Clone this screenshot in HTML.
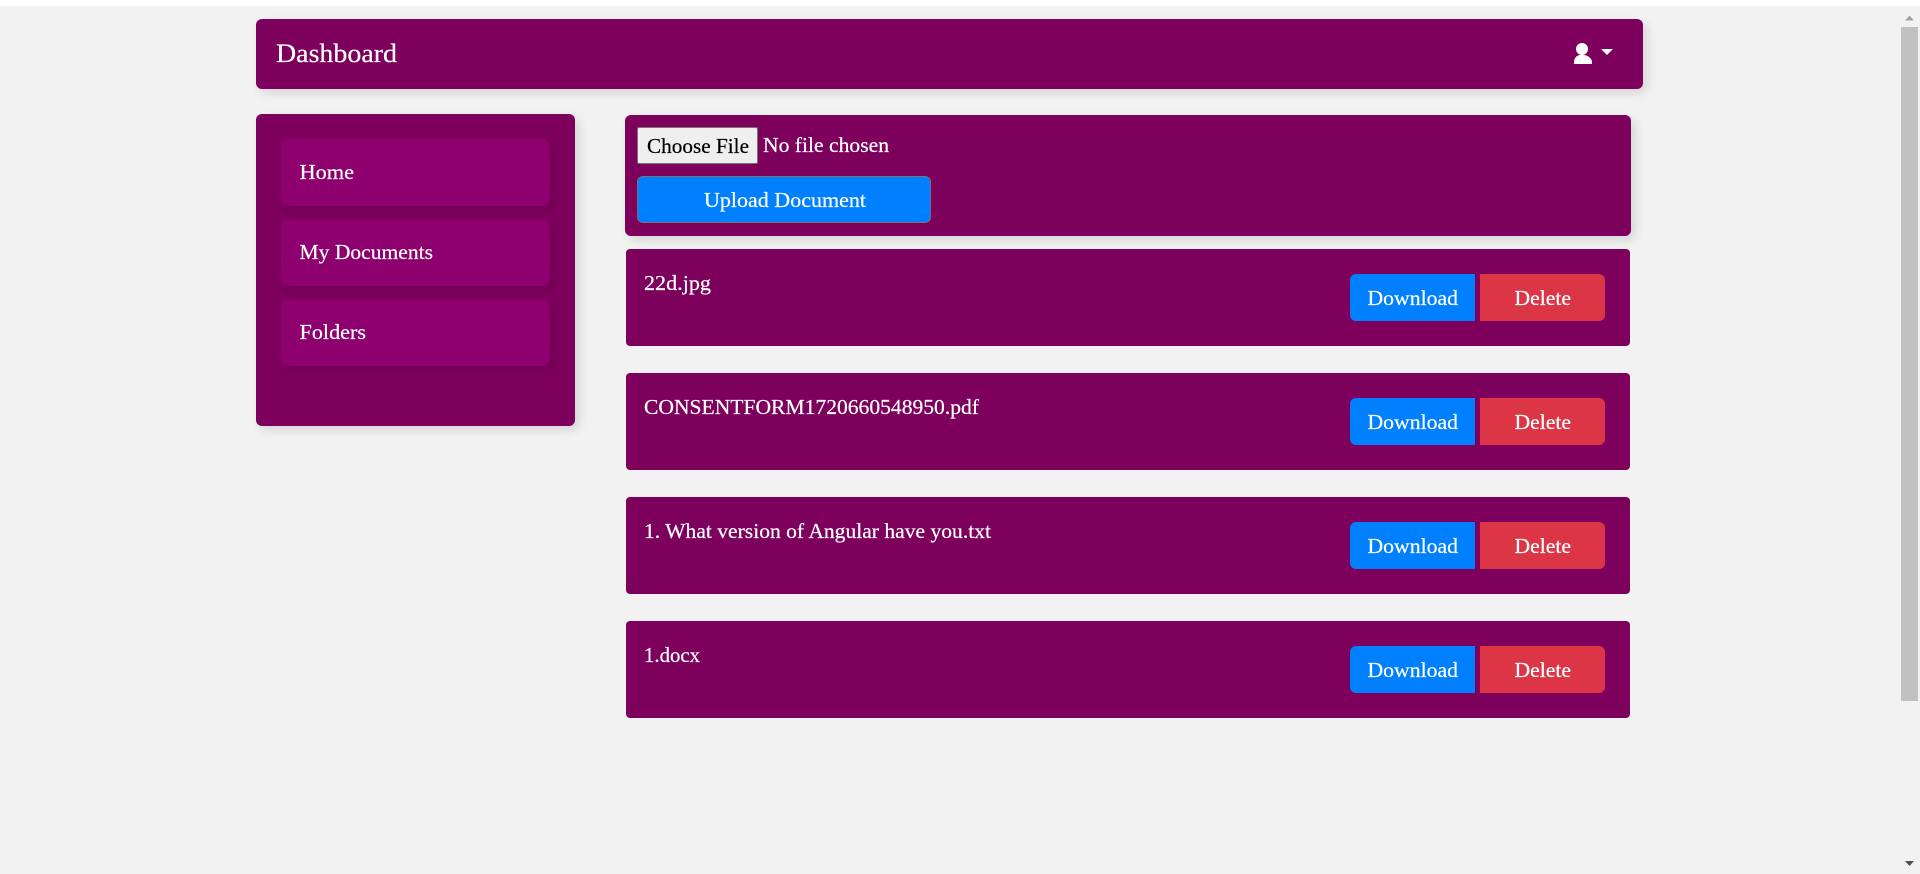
<!DOCTYPE html>
<html lang="en">
<head>
<meta charset="utf-8">
<title>Dashboard</title>
<style>
html,body{margin:0;padding:0;width:1920px;height:874px;overflow:hidden;background:#f2f2f2}
.a{position:absolute;box-sizing:border-box}
.p{background:#7d005d}
.item{background:#8f006f;border-radius:7px;left:281px;width:269px;height:67px;box-shadow:4px 4px 10px rgba(0,0,0,.12)}
.card{background:#7d005d;border-radius:4px;left:626px;width:1004px;height:97px}
.dl{background:#0080ff;left:1350px;width:125px;height:47px;border-radius:6px 0 0 6px}
.del{background:#dc3545;left:1480px;width:125px;height:47px;border-radius:0 6px 6px 0}
svg text{font-family:"Liberation Serif",serif;fill:#fff;stroke:#fff;stroke-width:.2px;font-size:21px}
</style>
</head>
<body>
<div class="a" style="left:0;top:0;width:1920px;height:6px;background:#fff"></div>

<div class="a p" style="left:256px;top:19px;width:1387px;height:70px;border-radius:6px;box-shadow:4px 4px 10px rgba(0,0,0,.12)"></div>
<div class="a p" style="left:256px;top:114px;width:319px;height:312px;border-radius:6px;box-shadow:4px 4px 10px rgba(0,0,0,.12)"></div>
<div class="a item" style="top:139px"></div>
<div class="a item" style="top:219px"></div>
<div class="a item" style="top:299px"></div>

<div class="a p" style="left:625px;top:115px;width:1006px;height:121px;border-radius:6px;box-shadow:4px 4px 10px rgba(0,0,0,.12)"></div>
<div class="a" style="left:637px;top:127px;width:121px;height:37px;background:#efefef;border:1px solid #767676;border-radius:2px"></div>
<div class="a" style="left:637px;top:176px;width:294px;height:47px;background:#0080ff;border:1px solid #767676;border-radius:6px"></div>

<div class="a card" style="top:249px"></div>
<div class="a card" style="top:373px"></div>
<div class="a card" style="top:497px"></div>
<div class="a card" style="top:621px"></div>

<div class="a dl" style="top:274px"></div><div class="a del" style="top:274px"></div>
<div class="a dl" style="top:398px"></div><div class="a del" style="top:398px"></div>
<div class="a dl" style="top:522px"></div><div class="a del" style="top:522px"></div>
<div class="a dl" style="top:646px"></div><div class="a del" style="top:646px"></div>

<!-- scrollbar -->
<div class="a" style="left:1901px;top:27px;width:17px;height:674px;background:#c1c1c1"></div>

<svg class="a" style="left:0;top:0" width="1920" height="874" viewBox="0 0 1920 874">
<text x="276" y="62" style="font-size:26px" textLength="121" lengthAdjust="spacingAndGlyphs">Dashboard</text>
<circle cx="1582" cy="49" r="6" fill="#fff"/>
<path d="M1574 64v-2c0-4 3-7 6.500-7h3c3.500 0 8.500 3 8.500 7v2z" fill="#fff"/>
<path d="M1601 49h12l-6 6z" fill="#fff"/>

<text x="299.500" y="179" textLength="54.500" lengthAdjust="spacingAndGlyphs">Home</text>
<text x="299.500" y="259" textLength="133.500" lengthAdjust="spacingAndGlyphs">My Documents</text>
<text x="299.500" y="339" textLength="66.500" lengthAdjust="spacingAndGlyphs">Folders</text>

<text x="647" y="153" style="fill:#000;stroke:#000" textLength="102" lengthAdjust="spacingAndGlyphs">Choose File</text>
<text x="763" y="152" textLength="126" lengthAdjust="spacingAndGlyphs">No file chosen</text>
<text x="704" y="207" textLength="162" lengthAdjust="spacingAndGlyphs">Upload Document</text>

<text x="644" y="290" textLength="67" lengthAdjust="spacingAndGlyphs">22d.jpg</text>
<text x="644" y="414" textLength="335" lengthAdjust="spacingAndGlyphs">CONSENTFORM1720660548950.pdf</text>
<text x="644" y="538" textLength="347" lengthAdjust="spacingAndGlyphs">1. What version of Angular have you.txt</text>
<text x="644" y="662" textLength="56" lengthAdjust="spacingAndGlyphs">1.docx</text>

<text x="1367.500" y="305" textLength="90.500" lengthAdjust="spacingAndGlyphs">Download</text>
<text x="1514.500" y="305" textLength="56.500" lengthAdjust="spacingAndGlyphs">Delete</text>
<text x="1367.500" y="429" textLength="90.500" lengthAdjust="spacingAndGlyphs">Download</text>
<text x="1514.500" y="429" textLength="56.500" lengthAdjust="spacingAndGlyphs">Delete</text>
<text x="1367.500" y="553" textLength="90.500" lengthAdjust="spacingAndGlyphs">Download</text>
<text x="1514.500" y="553" textLength="56.500" lengthAdjust="spacingAndGlyphs">Delete</text>
<text x="1367.500" y="677" textLength="90.500" lengthAdjust="spacingAndGlyphs">Download</text>
<text x="1514.500" y="677" textLength="56.500" lengthAdjust="spacingAndGlyphs">Delete</text>

<path d="M1905 20.500l4.500-5 4.500 5z" fill="#a3a3a3"/>
<path d="M1905 861h9l-4.500 5z" fill="#505050"/>
</svg>
</body>
</html>
